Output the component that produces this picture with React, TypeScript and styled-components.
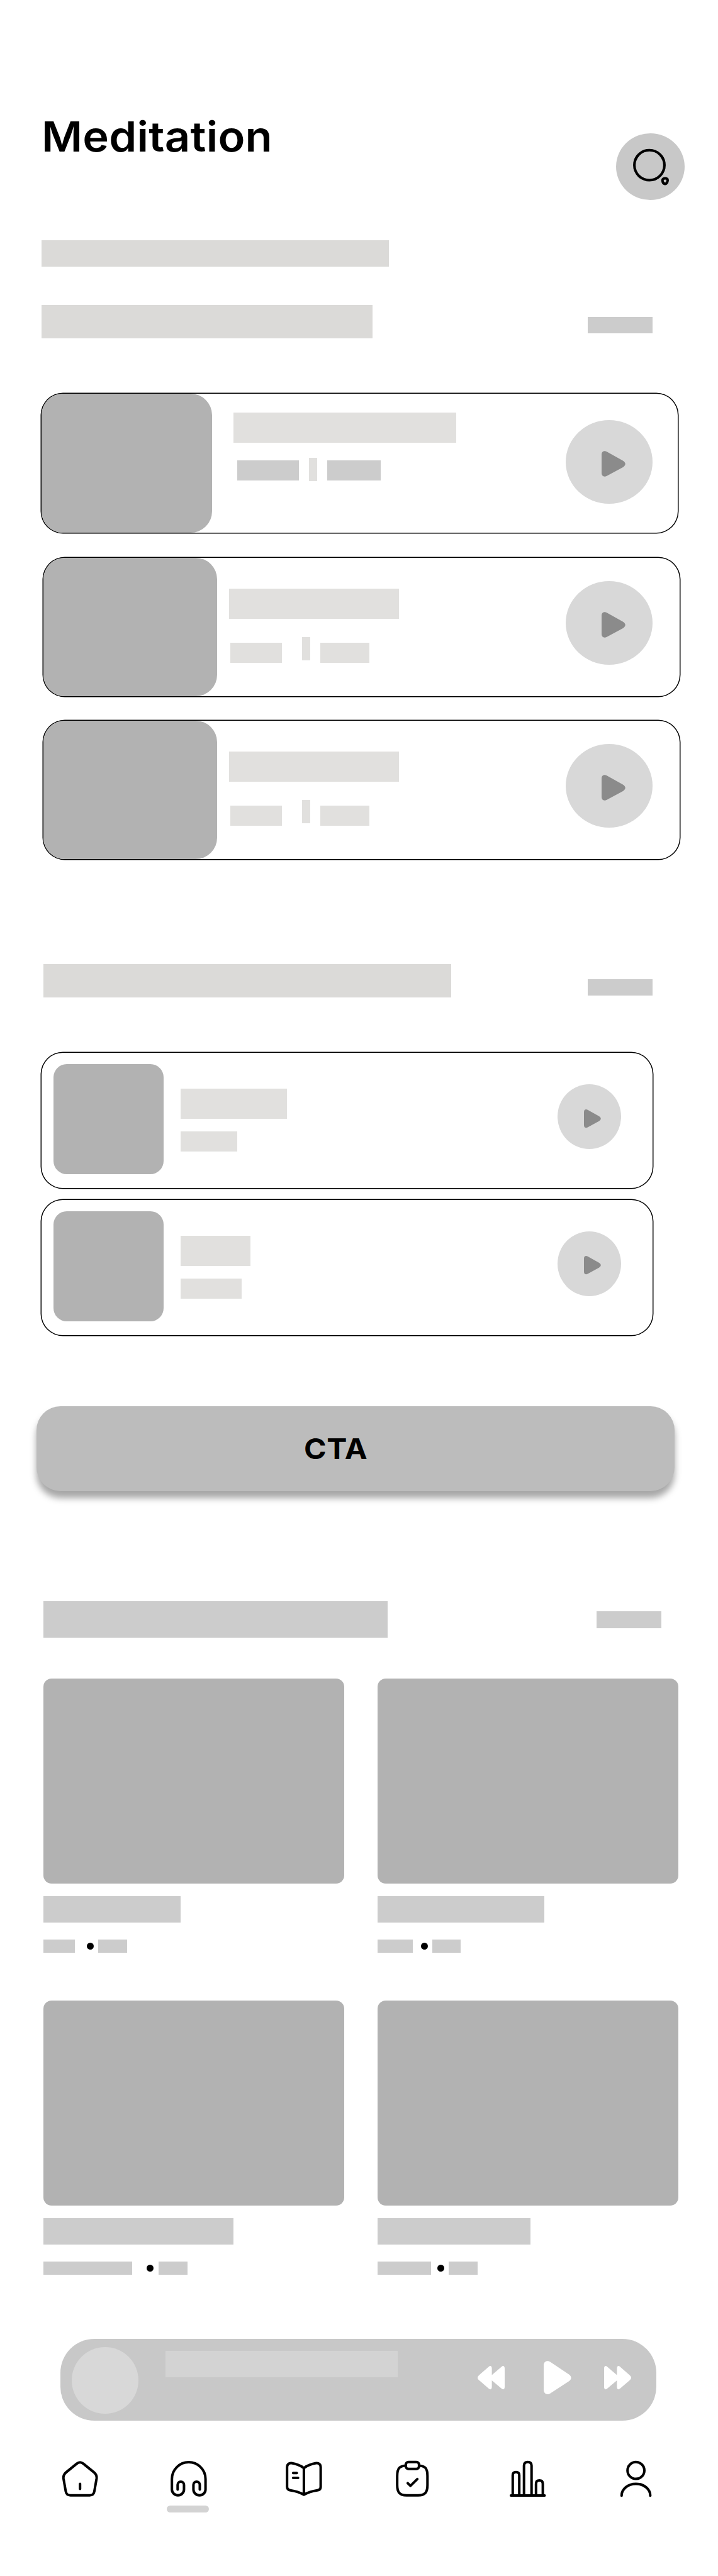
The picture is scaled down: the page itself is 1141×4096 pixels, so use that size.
import React from "react";
import styled, { createGlobalStyle } from "styled-components";

const GlobalStyle = createGlobalStyle`
  *, *::before, *::after { box-sizing: border-box; }
  body { margin: 0; background: #fff; }
  svg { display: block; overflow: visible; }
`;

const tones = {
  heading: "#dbdad8",
  soft: "#e1e0de",
  mid: "#cccccc",
  image: "#b2b2b2",
  disc: "#d8d8d8",
  arrow: "#8b8b8b",
  surface: "#c8c8c8",
};

type Tone = keyof typeof tones;

const Page = styled.main`
  width: 1141px;
  height: 4096px;
  padding: 185px 0 0 66px;
  overflow: hidden;
  display: flex;
  flex-direction: column;
  font-family: Inter, "Liberation Sans", sans-serif;
  color: #000;
`;

const Header = styled.header`
  display: flex;
  align-items: flex-start;
  justify-content: space-between;
  width: 1022px;
  height: 133px;
`;

const Title = styled.h1`
  margin: -1px 0 0 0.3px;
  font-size: 66.5px;
  font-weight: 600;
  line-height: 66px;
  letter-spacing: 0.2px;
  white-space: nowrap;
  transform: scaleX(1.062);
  transform-origin: left center;
`;

const SearchButton = styled.button`
  width: 109px;
  height: 106px;
  margin: 27px 0 0;
  padding: 0;
  border: 0;
  border-radius: 50%;
  background: ${tones.surface};
`;

const Bar = styled.div<{ $w: number; $h: number; $tone?: Tone; $top?: number; $left?: number }>`
  flex: none;
  width: ${(p) => p.$w}px;
  height: ${(p) => p.$h}px;
  margin-top: ${(p) => p.$top ?? 0}px;
  margin-left: ${(p) => p.$left ?? 0}px;
  background: ${(p) => tones[p.$tone ?? "soft"]};
`;

const SectionHead = styled.div<{ $top: number; $left: number; $end: number }>`
  display: flex;
  align-items: flex-start;
  justify-content: space-between;
  width: ${(p) => p.$end - 66 - p.$left}px;
  margin: ${(p) => p.$top}px 0 0 ${(p) => p.$left}px;
`;

const Stack = styled.div<{ $top: number; $gap: number }>`
  display: flex;
  flex-direction: column;
  gap: ${(p) => p.$gap}px;
  margin-top: ${(p) => p.$top}px;
`;

const Card = styled.article<{ $w: number; $h: number; $left?: number }>`
  display: flex;
  align-items: flex-start;
  width: ${(p) => p.$w}px;
  height: ${(p) => p.$h}px;
  margin-left: ${(p) => p.$left ?? 0}px;
  border-radius: 34px;
  box-shadow: 0 0 0 1.5px #000;
`;

const Cover = styled.div<{ $w: number }>`
  flex: none;
  width: ${(p) => p.$w}px;
  height: 100%;
  border-radius: 34px;
  background: ${tones.image};
`;

const Thumb = styled.div`
  flex: none;
  width: 175px;
  height: 175px;
  margin: 18px 0 0 19px;
  border-radius: 21px;
  background: ${tones.image};
`;

const Details = styled.div<{ $top: number; $left: number }>`
  flex: 1;
  display: flex;
  flex-direction: column;
  margin: ${(p) => p.$top}px 0 0 ${(p) => p.$left}px;
`;

const Meta = styled.div<{ $top: number; $left?: number }>`
  display: flex;
  align-items: flex-start;
  margin: ${(p) => p.$top}px 0 0 ${(p) => p.$left ?? 0}px;
`;

const PlayDisc = styled.button<{ $w: number; $h: number; $top: number; $right: number; $px: number; $py: number }>`
  flex: none;
  width: ${(p) => p.$w}px;
  height: ${(p) => p.$h}px;
  margin: ${(p) => p.$top}px ${(p) => p.$right}px 0 0;
  padding: ${(p) => p.$py}px 0 0 ${(p) => p.$px}px;
  display: flex;
  align-items: flex-start;
  border: 0;
  border-radius: 50%;
  background: ${tones.disc};
`;

const CtaButton = styled.button`
  display: flex;
  align-items: center;
  flex: none;
  width: 1014px;
  height: 135px;
  margin: 113.4px 0 0 -8px;
  padding: 2px 0 0 425px;
  border: 0;
  border-radius: 38px;
  background: #bcbcbc;
  box-shadow: 0 10.6px 10.6px rgba(0, 0, 0, 0.35);
  font: 700 45.5px/46px Inter, "Liberation Sans", sans-serif;
  color: #000;
`;

const CtaLabel = styled.span`
  letter-spacing: 0.6px;
  transform: scaleX(1.06);
  transform-origin: left center;
`;

const TileGrid = styled.div`
  display: grid;
  grid-template-columns: 478px 478px;
  column-gap: 53px;
  row-gap: 76px;
  margin: 64.3px 0 0 2.6px;
`;

const Tile = styled.article`
  display: flex;
  flex-direction: column;
`;

const TileImage = styled.div`
  height: 326px;
  border-radius: 13px;
  background: ${tones.image};
`;

const Dot = styled.span<{ $left: number }>`
  flex: none;
  width: 11px;
  height: 11px;
  margin: 5px 7.6px 0 ${(p) => p.$left}px;
  border-radius: 50%;
  background: #000;
`;

const Player = styled.section`
  display: flex;
  align-items: flex-start;
  flex: none;
  width: 947px;
  height: 130px;
  margin: 102.2px 0 0 29.5px;
  border-radius: 54px;
  background: ${tones.surface};
`;

const Avatar = styled.div`
  flex: none;
  width: 106px;
  height: 106px;
  margin: 13px 0 0 18.5px;
  border-radius: 50%;
  background: ${tones.disc};
`;

const TrackName = styled.div`
  flex: none;
  width: 369px;
  height: 42px;
  margin: 19px 0 0 42.5px;
  background: #d3d3d3;
`;

const Controls = styled.div`
  display: flex;
  align-items: center;
  height: 53px;
  margin: 35px 0 0 127px;
`;

const PlayerPlay = styled.div`
  margin: 0 53.3px 0 62.1px;
`;

const Nav = styled.nav`
  display: flex;
  align-items: flex-start;
  margin: 62.2px 0 0 30.1px;
`;

const NavItem = styled.a<{ $gap: number }>`
  flex: none;
  width: 62px;
  margin-left: ${(p) => p.$gap}px;
`;

const ActiveMark = styled.div`
  width: 67px;
  height: 11px;
  margin: 11px 0 0 -4px;
  border-radius: 5.5px;
  background: #d3d3d3;
`;

const PlayIcon = ({ w, h }: { w: number; h: number }) => (
  <svg width={w} height={h} viewBox="0 0 38 41" preserveAspectRatio="none" fill={tones.arrow}>
    <path d="M0 5.8C0 .8 4 -1.3 8.4 1.2L33.6 15.2C39.3 18.5 39.3 22.9 33.6 26.2L8.4 39.9C4 42.3 0 40.2 0 35.2Z" />
  </svg>
);

const SkipIcon = ({ back }: { back?: boolean }) => (
  <svg width="43" height="37.3" viewBox="0 0 43 37.3" fill="#fff">
    <path
      transform={back ? "matrix(-1 0 0 1 43 0)" : undefined}
      d="M0 4C0 .2 2.4-1 4.9 1.2L20.4 14.4V4C20.4.2 22.8-1 25.3 1.2L41 14.9C43.6 17.2 43.6 20.1 41 22.4L25.3 36.1C22.8 38.3 20.4 37.1 20.4 33.3V22.9L4.9 36.1C2.4 38.3 0 37.1 0 33.3Z"
    />
  </svg>
);

const navIcons = [
  {
    gap: 0,
    art: (
      <>
        <path d="M26 6.4Q31.2 2.1 36.4 6.4L53.6 20.4Q58.2 24.3 57.5 30L53.9 50.5Q52.8 56.7 46.5 56.7H15.9Q9.6 56.7 8.5 50.5L4.9 30Q4.2 24.3 8.8 20.4Z" />
        <path d="M31.2 38.5V46.6" />
      </>
    ),
  },
  {
    gap: 110.9,
    active: true,
    art: (
      <>
        <path d="M13.3 47.6V40C13.3 37 15.5 34.9 18.3 34.9C21.2 34.9 23.4 37 23.4 40V47.5C23.4 52.6 19 56.7 13.8 56.7C8.6 56.7 4.2 52.6 4.2 47.5V30.7C4.2 16 16.2 4 30.9 4S57.6 16 57.6 30.7V47.5C57.6 52.6 53.2 56.7 48 56.7C42.8 56.7 38.4 52.6 38.4 47.5V40C38.4 37 40.6 34.9 43.5 34.9C46.3 34.9 48.5 37 48.5 40V47.6" />
      </>
    ),
  },
  {
    gap: 120.9,
    art: (
      <>
        <path d="M30.9 13.3C25.5 9.4 18.5 6.7 11.3 5.6C7.3 5 4.2 7.6 4.2 11.7V43C4.2 46.4 6.2 48.3 9.4 48.7C16.5 49.7 24.5 52 30.9 55.8C37.3 52 45.3 49.7 52.4 48.7C55.6 48.3 57.6 46.4 57.6 43V11.7C57.6 7.6 54.5 5 50.5 5.6C43.3 6.7 36.3 9.4 30.9 13.3V55.8" />
        <path d="M13.9 21.2H19.7M13.9 29.1H21.7" />
      </>
    ),
  },
  {
    gap: 111.1,
    art: (
      <>
        <path d="M19.8 9.4C10 10 6.2 13.5 6.2 26V40.5C6.2 52.5 10.5 56.7 21 56.7H39.5C50 56.7 54.3 52.5 54.3 40.5V26C54.3 13.5 50.5 10 40.9 9.4" />
        <rect x="19.9" y="3.7" width="21" height="11" rx="4.2" />
        <path d="M22.9 37.4L27.3 41.6L38.2 30.8" />
      </>
    ),
  },
  {
    gap: 119.9,
    art: (
      <>
        <path d="M4.9 57.1H58.5" />
        <path d="M7.8 57V25C7.8 21.6 9.4 19.7 13 19.7S18.2 21.6 18.2 25V57" />
        <path d="M25.7 57V9.6C25.7 5.7 27.6 3.7 31.7 3.7S37.7 5.7 37.7 9.6V57" />
        <path d="M44.8 57V38.4C44.8 34.9 46.5 33 50.2 33S55.6 34.9 55.6 38.4V57" />
      </>
    ),
  },
  {
    gap: 113.5,
    art: (
      <>
        <circle cx="28.6" cy="17.2" r="13.4" />
        <path d="M5.8 57.2C5.8 46.8 16 38.4 28.6 38.4S51.4 46.8 51.4 57.2" />
      </>
    ),
  },
];

const lowerSession = {
  h: 220, left: 3, cover: 276, top: 49, indent: 19, name: 270, metaTop: 29, metaLeft: 2,
  tone: "soft" as Tone, a: 82, gap: 32, b: 77.5, barTop: 9, discTop: 37, right: 42.6,
};

const sessions = [
  {
    h: 221, left: 0, cover: 271, top: 30, indent: 34, name: 354, metaTop: 24, metaLeft: 6,
    tone: "mid" as Tone, a: 98, gap: 16, b: 84.6, barTop: 4, discTop: 42, right: 39.6,
  },
  lowerSession,
  lowerSession,
];

const tracks = [
  { name: 169.5, sub: 90 },
  { name: 111, sub: 97 },
];

const tiles = [
  { name: 218.4, a: 50.9, dot: 18.4, b: 45.2 },
  { name: 265.6, a: 56, dot: 13.2, b: 45 },
  { name: 302.7, a: 141.2, dot: 23.4, b: 45.8 },
  { name: 243.8, a: 85.2, dot: 10.1, b: 45.1 },
];

export default function App() {
  return (
    <>
      <GlobalStyle />
      <Page>
        <Header>
          <Title>Meditation</Title>
          <SearchButton aria-label="Search">
            <svg width="109" height="106" viewBox="0 0 109 106" fill="none" stroke="#000" strokeWidth="4.1">
              <circle cx="53" cy="50.6" r="23.9" />
              <path d="M74.1 73.3C75.6 70.9 80.4 70.9 81.7 73.1C82.9 75.4 80.7 80.4 78 80.4C74.8 80.4 72.8 75.8 74.1 73.3Z" />
            </svg>
          </SearchButton>
        </Header>

        <Bar $w={552} $h={42} $top={64} $tone="heading" />

        <SectionHead $top={61} $left={0} $end={1037}>
          <Bar $w={525.6} $h={53} $tone="heading" />
          <Bar $w={103} $h={26} $top={19} $tone="mid" />
        </SectionHead>

        <Stack $top={88} $gap={39.5}>
          {sessions.map((s, i) => (
            <Card key={i} $w={1011} $h={s.h} $left={s.left}>
              <Cover $w={s.cover} />
              <Details $top={s.top} $left={s.indent}>
                <Bar $w={s.name} $h={48} />
                <Meta $top={s.metaTop} $left={s.metaLeft}>
                  <Bar $w={s.a} $h={32} $top={s.barTop} $tone={s.tone} />
                  <Bar $w={13} $h={37} $left={s.gap} />
                  <Bar $w={s.b} $h={32} $top={s.barTop} $left={16} $tone={s.tone} />
                </Meta>
              </Details>
              <PlayDisc $w={138} $h={133} $top={s.discTop} $right={s.right} $px={57} $py={49} aria-label="Play">
                <PlayIcon w={37.8} h={40.9} />
              </PlayDisc>
            </Card>
          ))}
        </Stack>

        <SectionHead $top={167} $left={2.6} $end={1037}>
          <Bar $w={648} $h={53} $tone="heading" />
          <Bar $w={103} $h={26} $top={24} $tone="mid" />
        </SectionHead>

        <Stack $top={88} $gap={18.6}>
          {tracks.map((t, i) => (
            <Card key={i} $w={971} $h={215}>
              <Thumb />
              <Details $top={57} $left={26.8}>
                <Bar $w={t.name} $h={48} />
                <Bar $w={t.sub} $h={32} $top={20} />
              </Details>
              <PlayDisc $w={101} $h={103} $top={50} $right={50} $px={42} $py={39.5} aria-label="Play">
                <PlayIcon w={26.9} h={29.3} />
              </PlayDisc>
            </Card>
          ))}
        </Stack>

        <CtaButton>
          <CtaLabel>CTA</CtaLabel>
        </CtaButton>

        <SectionHead $top={175.5} $left={2.6} $end={1051}>
          <Bar $w={547.2} $h={58} $tone="mid" />
          <Bar $w={103} $h={27} $top={16} $tone="mid" />
        </SectionHead>

        <TileGrid>
          {tiles.map((t, i) => (
            <Tile key={i}>
              <TileImage />
              <Bar $w={t.name} $h={42} $top={20} $tone="mid" />
              <Meta $top={27}>
                <Bar $w={t.a} $h={21} $tone="mid" />
                <Dot $left={t.dot} />
                <Bar $w={t.b} $h={21} $tone="mid" />
              </Meta>
            </Tile>
          ))}
        </TileGrid>

        <Player>
          <Avatar />
          <TrackName />
          <Controls>
            <SkipIcon back />
            <PlayerPlay>
              <svg width="43.5" height="53.1" viewBox="0 0 43.5 53.1" fill="#fff">
                <path d="M0 7C0 1 5.5-1.8 10.3 1.6L39.8 21.3C44.8 24.7 44.8 29.3 39.8 32.6L10.3 51.7C5.5 54.8 0 52 0 46Z" />
              </svg>
            </PlayerPlay>
            <SkipIcon />
          </Controls>
        </Player>

        <Nav>
          {navIcons.map((n, i) => (
            <NavItem key={i} $gap={n.gap}>
              <svg width="62" height="62" viewBox="0 0 62 62" fill="none" stroke="#000" strokeWidth="4" strokeLinecap="round" strokeLinejoin="round">
                {n.art}
              </svg>
              {n.active && <ActiveMark />}
            </NavItem>
          ))}
        </Nav>
      </Page>
    </>
  );
}
